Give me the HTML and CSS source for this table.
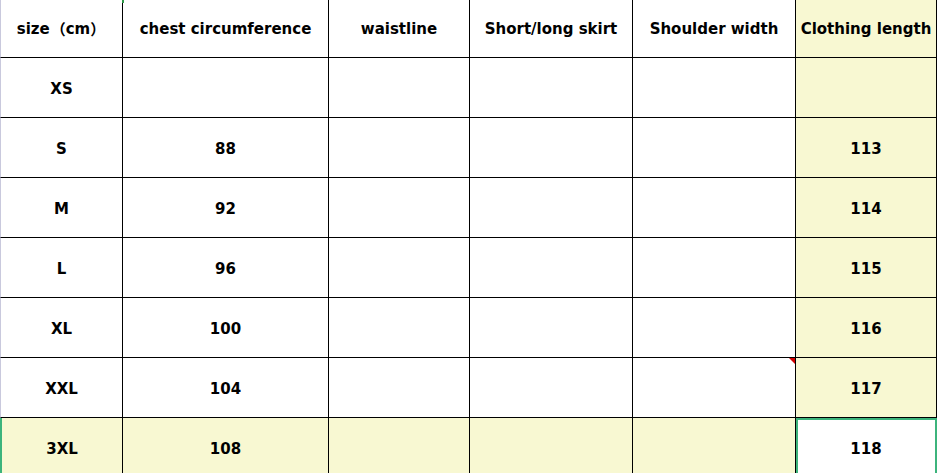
FILE: index.html
```html
<!DOCTYPE html>
<html>
<head>
<meta charset="utf-8">
<link rel="stylesheet" href="styles.css">
</head>
<body>
<div class="sheet">
  <div class="cell head first">size<span class="cjk open">（</span>cm<span class="cjk close">）</span></div>
  <div class="cell head mark-top">chest circumference</div>
  <div class="cell head">waistline</div>
  <div class="cell head">Short/long skirt</div>
  <div class="cell head">Shoulder width</div>
  <div class="cell head hl last">Clothing length</div>

  <div class="cell first">XS</div>
  <div class="cell"></div>
  <div class="cell"></div>
  <div class="cell"></div>
  <div class="cell"></div>
  <div class="cell hl last"></div>

  <div class="cell first">S</div>
  <div class="cell">88</div>
  <div class="cell"></div>
  <div class="cell"></div>
  <div class="cell"></div>
  <div class="cell hl last">113</div>

  <div class="cell first">M</div>
  <div class="cell">92</div>
  <div class="cell"></div>
  <div class="cell"></div>
  <div class="cell"></div>
  <div class="cell hl last">114</div>

  <div class="cell first">L</div>
  <div class="cell">96</div>
  <div class="cell"></div>
  <div class="cell"></div>
  <div class="cell"></div>
  <div class="cell hl last">115</div>

  <div class="cell first">XL</div>
  <div class="cell">100</div>
  <div class="cell"></div>
  <div class="cell"></div>
  <div class="cell"></div>
  <div class="cell hl last">116</div>

  <div class="cell first">XXL</div>
  <div class="cell">104</div>
  <div class="cell"></div>
  <div class="cell"></div>
  <div class="cell comment"></div>
  <div class="cell hl last">117</div>

  <div class="cell first hl rowsel">3XL</div>
  <div class="cell hl">108</div>
  <div class="cell hl"></div>
  <div class="cell hl"></div>
  <div class="cell hl"></div>
  <div class="cell last selected">118</div>
</div>
</body>
</html>
```

FILE: styles.css
```css
html, body {
  margin: 0;
  padding: 0;
  background: #ffffff;
}
.sheet {
  display: grid;
  grid-template-columns: 123px 206px 141px 163px 163px 141px;
  grid-template-rows: 58px repeat(7, 60px);
  width: 937px;
  height: 473px;
  overflow: hidden;
  font-family: "DejaVu Sans", Verdana, sans-serif;
  font-weight: bold;
  font-size: 15px;
  color: #000;
}
.cjk {
  display: inline-block;
  width: 16px;
  font-family: "Noto Sans CJK SC", sans-serif;
  font-weight: bold;
}
.open {
  text-align: right;
}
.close {
  text-align: left;
}
.cell {
  position: relative;
  box-sizing: border-box;
  border-right: 1px solid #000;
  border-bottom: 1px solid #000;
  display: flex;
  align-items: center;
  justify-content: center;
  white-space: nowrap;
  padding-top: 2px;
}
.head {
  padding-top: 0;
}
.first {
  border-left: 1px solid #c9c9dd;
}
.last {
  border-right: 1px solid #000;
}
.hl {
  background: #f8f8d2;
}
.mark-top::before {
  content: "";
  position: absolute;
  left: -1px;
  top: 0;
  width: 2px;
  height: 3px;
  background: #2e9a4a;
}
.comment::after {
  content: "";
  position: absolute;
  right: 0;
  top: 0;
  width: 0;
  height: 0;
  border-top: 6px solid #d40000;
  border-left: 6px solid transparent;
}
.rowsel {
  border-left: 2px solid #3cb47c;
}
.selected {
  background: #ffffff;
  outline: 2px solid #3cb47c;
  outline-offset: -2px;
}
```
